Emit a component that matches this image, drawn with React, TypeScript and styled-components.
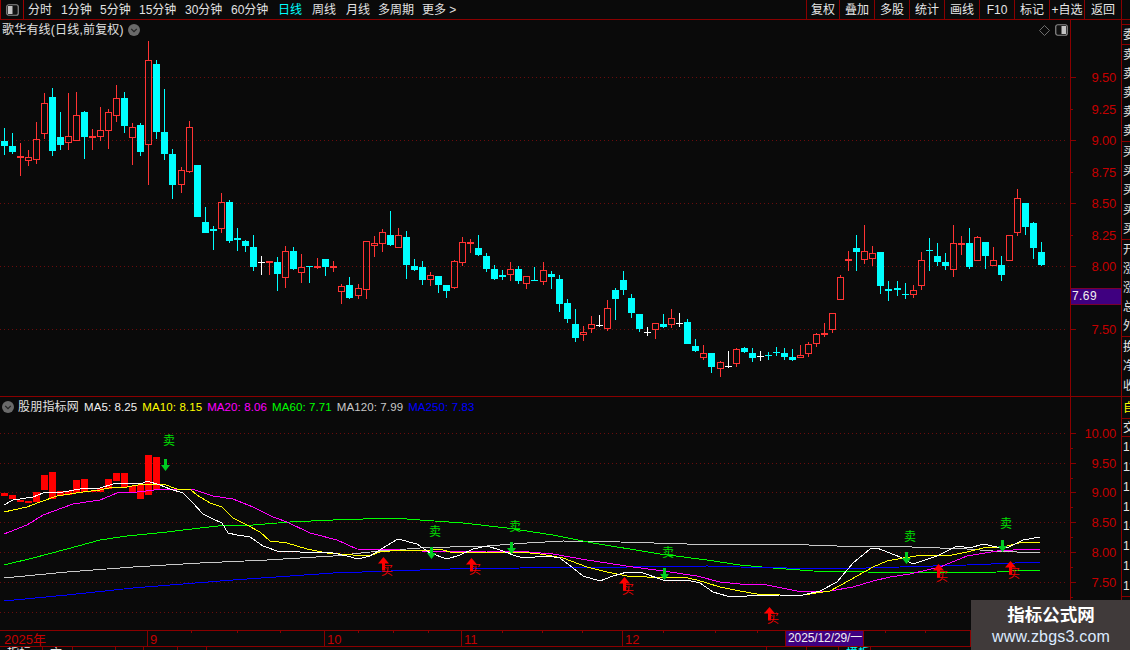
import React from "react";
import styled, { createGlobalStyle } from "styled-components";

const FONT = `"Liberation Sans", "Noto Sans CJK SC", sans-serif`;
const LINE = "#8a0000";
const BG = "#0a0a0a";

const Global = createGlobalStyle`
  html, body { margin: 0; padding: 0; background: ${BG}; }
  * { box-sizing: border-box; }
`;

const Page = styled.div`
  position: relative;
  width: 1130px;
  height: 650px;
  overflow: hidden;
  background: ${BG};
  font: 12px/14px ${FONT};
  color: #e6e6e6;
`;

/* ---------- top bar ---------- */
const TopBar = styled.header`
  display: flex;
  height: 20px;
  border-bottom: 1px solid ${LINE};
`;
const ModeBox = styled.div`
  width: 24px;
  display: flex;
  align-items: center;
  justify-content: center;
  border: 1px solid #9a0000;
  border-width: 0 1px 0 1px;
`;
const Nav = styled.nav`
  display: flex;
  align-items: center;
  padding-left: 4px;
  flex: 1;
`;
const NavItem = styled.span<{ $w: number; $active?: boolean }>`
  width: ${(p) => p.$w}px;
  white-space: nowrap;
  color: ${(p) => (p.$active ? "#00ffff" : "#e2e2e2")};
`;
const Tools = styled.div`
  display: flex;
  margin-right: 8px;
  border-right: 1px solid ${LINE};
`;
const ToolCell = styled.div<{ $w?: number }>`
  width: ${(p) => p.$w ?? 35}px;
  display: flex;
  align-items: center;
  justify-content: center;
  border-left: 1px solid ${LINE};
  white-space: nowrap;
  color: #e6e6e6;
`;

/* ---------- layout ---------- */
const Body = styled.div`
  display: flex;
  height: 630px;
`;
const ChartColumn = styled.div`
  width: 1121px;
  display: flex;
  flex-direction: column;
`;
const Panel = styled.section<{ $h: number }>`
  position: relative;
  display: flex;
  height: ${(p) => p.$h}px;
  flex: none;
  border-bottom: 1px solid ${LINE};
`;
const ChartSvg = styled.svg`
  display: block;
  flex: none;
  font-family: ${FONT};
  font-size: 12px;
`;
const AxisWrap = styled.div`
  width: 51px;
  flex: none;
  border-left: 1px solid ${LINE};
`;
const PanelTitle = styled.div<{ $top: number }>`
  position: absolute;
  left: 2px;
  top: ${(p) => p.$top}px;
  display: flex;
  align-items: center;
  gap: 4px;
  white-space: nowrap;
`;
const TitleText = styled.span`
  color: #e0e0e0;
  letter-spacing: 0.2px;
`;
const MaGroup = styled.div`
  display: flex;
  gap: 5px;
  margin-left: 1px;
`;
const MaLabel = styled.span<{ $c: string }>`
  color: ${(p) => p.$c};
  font-size: 11.5px;
  letter-spacing: 0.1px;
`;
const CornerTools = styled.div`
  position: absolute;
  right: 53px;
  top: 4px;
  display: flex;
  align-items: center;
  gap: 5px;
`;
const CursorChip = styled.div`
  position: absolute;
  left: 785px;
  top: 0;
  width: 79px;
  height: 15px;
  background: #3f0080;
  border-left: 1px solid ${LINE};
  border-right: 1px solid ${LINE};
  color: #f0f0f0;
  line-height: 15px;
  padding-left: 2px;
  white-space: nowrap;
  letter-spacing: -0.1px;
`;
const PriceChip = styled.div`
  position: absolute;
  right: 0;
  top: 268px;
  width: 50px;
  height: 17px;
  background: #3f0080;
  border-top: 1px solid #7a0030;
  border-bottom: 1px solid #7a0030;
  color: #f0f0f0;
  line-height: 15px;
  padding-left: 1px;
  font-size: 12px;
  letter-spacing: 0.4px;
`;
const DateBar = styled.div`
  position: relative;
  height: 16px;
  flex: none;
  border-bottom: 1px solid ${LINE};
`;
const TabRow = styled.div`
  display: flex;
  flex: 1;
  overflow: hidden;
`;
const Tab = styled.div<{ $w: number; $c?: string }>`
  width: ${(p) => p.$w}px;
  flex: none;
  border-right: 1px solid ${LINE};
  padding-left: 7px;
  line-height: 14px;
  margin-top: -1px;
  white-space: nowrap;
  color: ${(p) => p.$c ?? "#e6e6e6"};
`;

/* ---------- cropped right side list ---------- */
const SideBar = styled.aside`
  width: 9px;
  flex: none;
  display: flex;
  flex-direction: column;
  border-left: 1px solid ${LINE};
  overflow: hidden;
`;
const SideGroup = styled.div<{ $h: number }>`
  height: ${(p) => p.$h}px;
  flex: none;
  border-bottom: 1px solid ${LINE};
  display: flex;
  flex-direction: column;
  justify-content: space-around;
  padding-left: 1px;
`;
const SideRow = styled.span<{ $c?: string }>`
  display: block;
  width: 20px;
  white-space: nowrap;
  line-height: 14px;
  color: ${(p) => p.$c ?? "#e4e4e4"};
`;

/* ---------- watermark ---------- */
const Watermark = styled.div`
  position: absolute;
  right: 0;
  bottom: 0;
  width: 159px;
  height: 50px;
  background: #403a3a;
  display: flex;
  flex-direction: column;
  align-items: center;
  padding: 4px 0 0 1px;
`;
const MarkTitle = styled.div`
  color: #fff;
  font-size: 17.5px;
  line-height: 22px;
  font-weight: 700;
`;
const MarkUrl = styled.div`
  color: #dcebff;
  font-size: 16px;
  line-height: 20px;
  letter-spacing: 0.2px;
  margin-top: 1px;
`;

/* ---------- data ---------- */
type K = [number, number, number, number, "r" | "c" | "w"];
const KS: K[] = [
  [128,141,146,155,"c"],[133,146,152,154,"c"],[143,156,158,176,"r"],[150,157,161,166,"r"],[122,139,160,164,"r"],
  [93,103,134,139,"r"],[88,97,151,156,"c"],[112,137,145,150,"c"],[93,136,143,150,"r"],[92,115,141,141,"r"],
  [111,112,137,159,"c"],[129,136,138,150,"r"],[107,130,137,141,"r"],[109,112,131,149,"r"],[85,98,116,122,"r"],
  [92,98,126,133,"c"],[123,127,138,165,"r"],[123,125,152,156,"c"],[41,60,145,185,"r"],[60,64,132,139,"c"],
  [89,132,154,160,"c"],[149,154,185,199,"c"],[167,170,185,193,"r"],[121,127,172,173,"r"],[165,165,217,217,"c"],
  [207,222,233,233,"c"],[226,229,231,250,"c"],[193,202,229,233,"r"],[200,202,241,243,"c"],[228,238,240,251,"c"],
  [240,241,246,252,"c"],[235,247,267,271,"c"],[256,262,263,275,"w"],[261,261,263,275,"r"],[257,262,274,291,"c"],
  [246,251,278,288,"r"],[247,251,269,270,"c"],[254,267,273,283,"r"],[266,266,267,283,"c"],[258,266,268,269,"r"],
  [259,259,267,276,"c"],[261,266,268,272,"r"],[284,286,292,304,"r"],[277,285,298,299,"c"],[284,288,296,299,"r"],
  [241,241,290,299,"r"],[236,243,246,257,"r"],[229,232,244,252,"r"],[211,235,245,246,"c"],[228,235,248,248,"r"],
  [231,237,265,279,"c"],[259,266,270,271,"c"],[261,267,280,285,"c"],[272,275,280,286,"r"],[276,276,285,293,"c"],
  [285,285,291,298,"c"],[260,261,288,289,"r"],[237,242,263,266,"r"],[239,242,244,253,"r"],[235,248,255,256,"c"],
  [253,256,269,272,"c"],[265,269,279,280,"c"],[270,275,277,280,"c"],[262,269,275,281,"r"],[266,269,281,284,"c"],
  [276,276,284,289,"r"],[267,280,281,281,"c"],[262,270,282,285,"r"],[271,274,277,289,"c"],[275,279,304,312,"c"],
  [299,303,319,323,"c"],[309,324,338,342,"c"],[326,332,335,341,"r"],[316,324,329,333,"r"],[315,325,326,327,"w"],
  [300,308,329,331,"r"],[288,290,299,320,"c"],[271,280,290,295,"c"],[294,298,313,318,"c"],[314,314,329,332,"c"],
  [327,332,333,336,"w"],[323,323,330,339,"r"],[314,324,327,328,"c"],[309,318,325,328,"r"],[313,323,324,327,"w"],
  [319,322,344,344,"c"],[339,346,351,352,"c"],[345,353,358,360,"r"],[353,353,367,373,"c"],[361,362,369,377,"r"],
  [351,366,367,368,"w"],[348,349,364,367,"r"],[347,348,352,353,"c"],[348,353,358,362,"c"],[351,356,357,361,"w"],
  [352,355,356,360,"c"],[347,352,353,356,"c"],[348,353,357,360,"c"],[349,357,360,361,"c"],[345,355,358,358,"r"],
  [342,344,354,357,"r"],[333,334,344,347,"r"],[323,333,335,337,"r"],[313,313,330,333,"r"],[275,277,300,300,"r"],
  [251,259,261,271,"r"],[235,248,252,271,"c"],[225,251,260,264,"r"],[246,253,259,266,"r"],[252,252,286,294,"c"],
  [281,289,291,301,"c"],[281,288,290,296,"c"],[283,294,295,299,"c"],[285,290,295,298,"r"],[252,260,286,290,"r"],
  [238,250,251,271,"c"],[243,256,262,266,"c"],[253,262,266,270,"c"],[225,243,270,277,"r"],[236,243,245,255,"r"],
  [228,243,267,269,"c"],[236,237,261,261,"r"],[242,242,256,269,"c"],[247,260,266,266,"r"],[256,265,275,281,"c"],
  [235,235,261,261,"r"],[189,198,233,236,"r"],[203,203,227,235,"c"],[222,223,248,259,"c"],[242,252,265,266,"c"],
];
const cx = (i: number) => 4 + 8 * i + [22, 44, 67, 89, 111].filter((j) => i >= j).length;

const VOL: [number, number][] = [
  [493,496],[495,499],[500,502],[501,503],[492,502],[475,490],[472,499],[491,496],[491,495],[480,493],
  [479,492],[491,492],[488,492],[479,489],[473,481],[473,487],[486,492],[485,499],[455,495],[457,490],
];

const MA: { c: string; d: string }[] = [
  { c: "#c8c8c8", d: "4,578 67,572 133,567 200,563 267,560 333,556 380,551 420,548 450,547 487,546 527,543 563,541 620,542 687,544 740,544 780,544 837,546 883,546 940,548 967,549 993,551 1040,553" },
  { c: "#00ff00", d: "4,565 33,558 67,549 100,540 127,536 167,532 200,528 227,525 253,525 290,522 333,520 393,518 420,520 463,523 507,528 553,535 593,543 660,554 707,560 740,565 773,568 813,571 867,572 913,573 997,572 1023,570 1040,570" },
  { c: "#0000ff", d: "4,601 67,595 133,588 233,580 333,573 420,570 450,569 520,568 627,567 707,566 740,567 833,569 900,567 967,565 1040,562" },
  { c: "#ff00ff", d: "4,534 27,525 43,515 73,504 100,500 117,493 137,492 163,489 192,489 213,496 233,499 253,507 273,517 287,522 310,533 337,540 357,549 400,550 443,552 487,551 517,551 553,554 587,560 633,567 663,571 697,576 720,582 740,584 767,585 797,591 830,591 853,587 873,581 890,577 910,574 940,567 967,556 997,551 1013,550 1040,549" },
  { c: "#ffff00", d: "4,512 27,507 40,502 57,496 83,492 100,490 113,487 127,487 143,484 163,484 177,489 190,489 197,495 210,503 222,507 233,518 247,525 260,532 270,541 287,543 307,549 327,553 353,555 372,555 380,552 400,550 420,551 440,549 453,553 475,552 493,553 520,552 540,554 563,558 587,567 607,572 627,576 647,577 663,577 683,577 697,580 720,587 740,591 757,594 780,595 803,595 830,591 850,580 873,567 887,561 903,558 923,555 947,556 967,552 987,547 1003,547 1023,542 1040,543" },
  { c: "#ffffff", d: "4,505 13,500 33,497 43,493 63,492 80,489 100,488 113,484 130,483 143,483 147,481 160,485 170,489 183,493 193,503 203,514 213,519 222,523 228,533 237,535 250,537 263,546 277,551 300,552 333,553 347,556 358,559 370,556 383,548 398,539 417,544 430,553 447,559 460,555 473,549 487,546 500,550 513,555 523,558 547,556 560,558 573,568 583,576 600,581 613,576 627,572 643,573 663,580 687,580 700,583 713,592 727,596 747,596 780,595 803,595 820,591 837,582 853,563 870,549 877,548 900,557 913,564 937,556 957,546 970,548 983,544 997,547 1007,548 1023,540 1040,537" },
];

const SELL = [[165,459,169,440],[431,547,435,531],[511,542,515,526],[664,568,668,552],[906,552,910,536],[1002,540,1006,523]];
const BUY = [[383,557,387,570],[471,558,475,569],[624,577,628,589],[769,607,773,618],[938,564,942,576],[1010,561,1014,573]];

const ModeIcon = ({ right }: { right?: boolean }) => (
  <svg width="13" height="12" viewBox="0 0 13 12">
    <rect x="0.75" y="0.75" width="11.5" height="10.5" rx="2" fill="#111" stroke="#8c8c8c" strokeWidth="1.2" />
    <rect x={right ? 6.5 : 2} y="2" width="4.5" height="8" fill="#c4c4c4" />
  </svg>
);
const DownBadge = () => (
  <svg width="12" height="12" viewBox="0 0 12 12">
    <circle cx="6" cy="6" r="6" fill="#6a6a6a" />
    <path d="M3.2 4.8 6 7.6 8.8 4.8" fill="none" stroke="#222" strokeWidth="1.2" />
  </svg>
);

const Grid = ({ ys, w }: { ys: number[]; w: number }) => (
  <g>
    {ys.map((y) => (
      <line key={y} x1={0} x2={w} y1={y + 0.5} y2={y + 0.5} stroke="#6a0c0c" strokeDasharray="1 3" shapeRendering="crispEdges" />
    ))}
  </g>
);

const Candle = ({ k, i }: { k: K; i: number }) => {
  const [h, t, b, l, kind] = k;
  const x = cx(i);
  const col = kind === "r" ? "#ff3333" : kind === "c" ? "#00ffff" : "#ffffff";
  const solid = kind !== "r" || b - t <= 2;
  return (
    <g>
      {solid ? (
        <>
          <rect x={x} y={h} width={1} height={Math.max(l - h, 1)} fill={col} />
          <rect x={x - 3} y={t} width={7} height={Math.max(b - t, 1)} fill={col} />
        </>
      ) : (
        <>
          {t > h && <rect x={x} y={h} width={1} height={t - h} fill={col} />}
          {l > b && <rect x={x} y={b} width={1} height={l - b} fill={col} />}
          <rect x={x - 2.5} y={t + 0.5} width={6} height={b - t - 1} fill="none" stroke={col} />
        </>
      )}
    </g>
  );
};

const Axis = ({ top, h, major, minor }: { top: number; h: number; major: [string, number, boolean?][]; minor: number[] }) => (
  <ChartSvg width={50} height={h} viewBox={`1071 ${top} 50 ${h}`} shapeRendering="crispEdges">
    {major.map(([s, y, short]) => (
      <g key={s}>
        <rect x={1071} y={y} width={short ? 2 : 5} height={1} fill={LINE} />
        <text x={1116} y={y + 5} textAnchor="end" fill="#c40000" fontSize="13" style={{ letterSpacing: "-0.2px" }}>{s}</text>
      </g>
    ))}
    {minor.map((y) => (
      <rect key={y} x={1071} y={y} width={2} height={1} fill={LINE} />
    ))}
  </ChartSvg>
);

const NAV: [string, number, boolean?][] = [
  ["分时", 33], ["1分钟", 39], ["5分钟", 39], ["15分钟", 46], ["30分钟", 46], ["60分钟", 47],
  ["日线", 34, true], ["周线", 34], ["月线", 32], ["多周期", 44], ["更多 >", 40],
];
const TOOLS: [string, number?][] = [["复权", 33], ["叠加"], ["多股"], ["统计"], ["画线"], ["F10"], ["标记"], ["+自选"], ["返回", 37]];
const MAS: [string, string][] = [
  ["MA5: 8.25", "#f0f0f0"], ["MA10: 8.15", "#ffff00"], ["MA20: 8.06", "#ff00ff"],
  ["MA60: 7.71", "#00ff00"], ["MA120: 7.99", "#c8c8c8"], ["MA250: 7.83", "#0000ff"],
];
const DATE_DIV: [number, string][] = [[147, "9"], [324, "10"], [461, "11"], [622, "12"], [970, "1"]];
const DATE_TICKS = [191, 237, 280, 358, 393, 428, 502, 542, 582, 663, 715, 757, 885, 925];

export default function App() {
  return (
    <Page>
      <Global />
      <TopBar>
        <ModeBox><ModeIcon /></ModeBox>
        <Nav>
          {NAV.map(([s, w, a]) => (
            <NavItem key={s} $w={w} $active={a}>{s}</NavItem>
          ))}
        </Nav>
        <Tools>
          {TOOLS.map(([s, w]) => (
            <ToolCell key={s} $w={w}>{s}</ToolCell>
          ))}
        </Tools>
      </TopBar>
      <Body>
        <ChartColumn>
          <Panel $h={377}>
            <ChartSvg width={1070} height={376} viewBox="0 20 1070 376" shapeRendering="crispEdges">
              <Grid ys={[77, 140, 203, 266, 329]} w={1066} />
              {KS.map((k, i) => (
                <Candle key={i} k={k} i={i} />
              ))}
            </ChartSvg>
            <AxisWrap>
              <Axis
                top={20}
                h={376}
                major={[["9.50", 77], ["9.25", 109, true], ["9.00", 140], ["8.75", 172, true], ["8.50", 203], ["8.25", 235, true], ["8.00", 266], ["7.50", 329]]}
                minor={[]}
              />
            </AxisWrap>
            <PanelTitle $top={3}>
              <TitleText>歌华有线(日线,前复权)</TitleText>
              <DownBadge />
            </PanelTitle>
            <CornerTools>
              <svg width="11" height="11" viewBox="0 0 11 11">
                <path d="M5.5 0.5 10.5 5.5 5.5 10.5 0.5 5.5Z" fill="none" stroke="#6e6e6e" />
              </svg>
              <ModeIcon right />
            </CornerTools>
            <PriceChip>7.69</PriceChip>
          </Panel>
          <Panel $h={234}>
            <ChartSvg width={1070} height={233} viewBox="0 397 1070 233">
              <g shapeRendering="crispEdges">
                <Grid ys={[433, 463, 492, 522, 552, 582, 612]} w={1066} />
                {VOL.map(([t, b], i) => (
                  <rect key={i} x={cx(i) - 3} y={t} width={7} height={b - t} fill="#ff0000" />
                ))}
                {MA.map((m) => (
                  <polyline key={m.c} points={m.d} fill="none" stroke={m.c} strokeWidth={1} />
                ))}
              </g>
              {SELL.map(([x, y, gx, gy]) => (
                <g key={x}>
                  <path d={`M${x - 1} ${y} h3 v6 h3 l-4.5 6 l-4.5 -6 h3z`} fill="#00cc22" />
                  <text x={gx} y={gy + 5} textAnchor="middle" fill="#00e000">卖</text>
                </g>
              ))}
              {BUY.map(([x, y, gx, gy]) => (
                <g key={x}>
                  <path d={`M${x + 0.5} ${y} l5.5 6.5 h-4 v7 h-3 v-7 h-4z`} fill="#ff0000" />
                  <text x={gx} y={gy + 5} textAnchor="middle" fill="#f00000">买</text>
                </g>
              ))}
            </ChartSvg>
            <AxisWrap>
              <Axis
                top={397}
                h={233}
                major={[["10.00", 433], ["9.50", 463], ["9.00", 492], ["8.50", 522], ["8.00", 552], ["7.50", 582]]}
                minor={[448, 478, 507, 537, 567, 597]}
              />
            </AxisWrap>
            <PanelTitle $top={3}>
              <DownBadge />
              <TitleText>股朋指标网</TitleText>
              <MaGroup>
                {MAS.map(([s, c]) => (
                  <MaLabel key={s} $c={c}>{s}</MaLabel>
                ))}
              </MaGroup>
            </PanelTitle>
          </Panel>
          <DateBar>
            <ChartSvg width={1121} height={15} viewBox="0 631 1121 15">
              <g shapeRendering="crispEdges">
                {DATE_DIV.map(([x]) => (
                  <rect key={x} x={x} y={631} width={1} height={15} fill={LINE} />
                ))}
                {DATE_TICKS.map((x) => (
                  <rect key={x} x={x} y={631} width={1} height={2} fill={LINE} />
                ))}
              </g>
              <text x={4} y={644} fill="#c40000" fontSize="13">2025年</text>
              {DATE_DIV.map(([x, s]) => (
                <text key={x} x={x + 3} y={644} fill="#c40000" fontSize="13">{s}</text>
              ))}
            </ChartSvg>
            <CursorChip>2025/12/29/一</CursorChip>
          </DateBar>
          <TabRow>
            <Tab $w={43}>指标</Tab>
            <Tab $w={30}>六</Tab>
            <Tab $w={43} />
            <Tab $w={28} />
            <Tab $w={34} />
            <Tab $w={29} />
            <Tab $w={560} />
            <Tab $w={40} />
            <Tab $w={32} />
            <Tab $w={32} $c="#00ffff">模板</Tab>
          </TabRow>
        </ChartColumn>
        <SideBar>
          <SideGroup $h={5} />
          <SideGroup $h={20}><SideRow>委比</SideRow></SideGroup>
          <SideGroup $h={97}>
            {["卖五", "卖四", "卖三", "卖二", "卖一"].map((s) => <SideRow key={s}>{s}</SideRow>)}
          </SideGroup>
          <SideGroup $h={98}>
            {["买一", "买二", "买三", "买四", "买五"].map((s) => <SideRow key={s}>{s}</SideRow>)}
          </SideGroup>
          <SideGroup $h={97}>
            {["开盘", "涨跌", "涨幅", "总手", "外盘"].map((s) => <SideRow key={s}>{s}</SideRow>)}
          </SideGroup>
          <SideGroup $h={60}>
            {["换手", "净资", "收益"].map((s) => <SideRow key={s}>{s}</SideRow>)}
          </SideGroup>
          <SideGroup $h={22}><SideRow $c="#ffff00">自选</SideRow></SideGroup>
          <SideGroup $h={18}><SideRow>交易</SideRow></SideGroup>
          <SideGroup $h={160}>
            {["10.1", "11.2", "12.3", "13.4", "14.5", "15.6", "16.7", "17.8"].map((s) => <SideRow key={s}>{s}</SideRow>)}
          </SideGroup>
        </SideBar>
      </Body>
      <Watermark>
        <MarkTitle>指标公式网</MarkTitle>
        <MarkUrl>www.zbgs3.com</MarkUrl>
      </Watermark>
    </Page>
  );
}
